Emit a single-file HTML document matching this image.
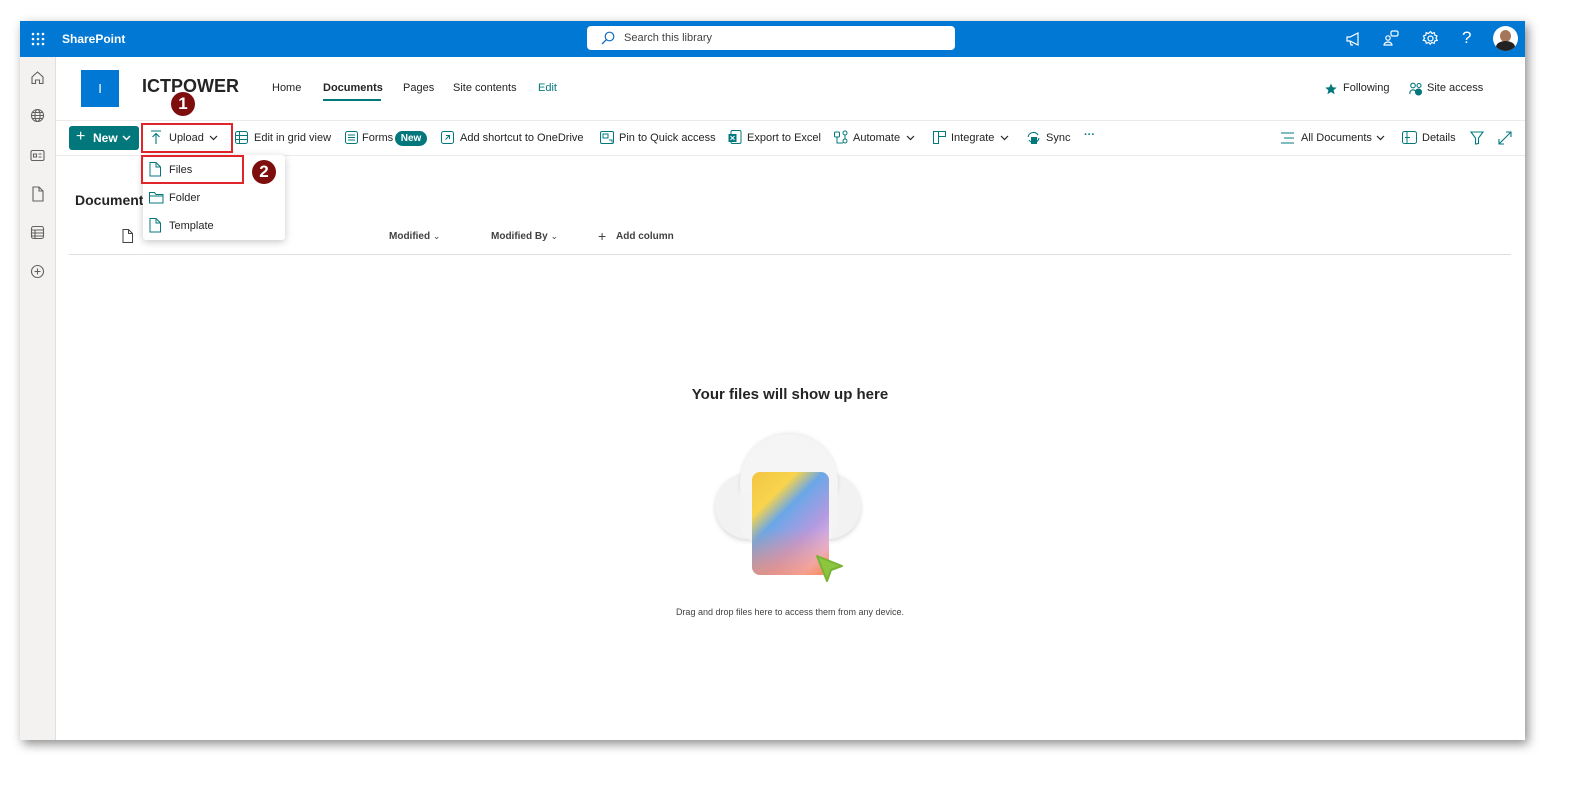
<!DOCTYPE html>
<html><head><meta charset="utf-8">
<style>
*{margin:0;padding:0;box-sizing:border-box}
body{width:1593px;height:793px;background:#fff;font-family:"Liberation Sans",sans-serif;position:relative;overflow:hidden;color:#242424}
.win{position:absolute;left:20px;top:21px;width:1505px;height:719px;background:#fff;box-shadow:3px 4px 10px rgba(0,0,0,.45)}
.hdr{position:absolute;left:0;top:0;width:1505px;height:36px;background:#0078d4;color:#fff}
.abs{position:absolute}
.rail{position:absolute;left:0;top:36px;width:36px;height:683px;background:#f3f2f1;border-right:1px solid #e1dfdd}
.t{position:absolute;font-size:11px;white-space:nowrap;color:#242424}
svg{display:block}
</style></head><body>
<div class="win">
 <div class="hdr">
  <svg class="abs" style="left:11px;top:11px" width="14" height="14"><g fill="#fff"><circle cx="2" cy="2" r="1.3"/><circle cx="7" cy="2" r="1.3"/><circle cx="12" cy="2" r="1.3"/><circle cx="2" cy="7" r="1.3"/><circle cx="7" cy="7" r="1.3"/><circle cx="12" cy="7" r="1.3"/><circle cx="2" cy="12" r="1.3"/><circle cx="7" cy="12" r="1.3"/><circle cx="12" cy="12" r="1.3"/></g></svg>
  <div class="abs" style="left:42px;top:11px;font-size:12px;font-weight:bold">SharePoint</div>
  <div class="abs" style="left:567px;top:5px;width:368px;height:24px;background:#fff;border-radius:4px">
   <svg class="abs" style="left:14px;top:5px" width="14" height="14"><circle cx="8.5" cy="5.5" r="4.3" fill="none" stroke="#0f6cbd" stroke-width="1.2"/><path d="M5.3 8.7L1 13" stroke="#0f6cbd" stroke-width="1.3"/></svg>
   <div class="abs" style="left:37px;top:6px;font-size:11px;color:#424242">Search this library</div>
  </div>
  <svg class="abs" style="left:1325px;top:10px" width="16" height="16" fill="none" stroke="#fff" stroke-width="1.2"><path d="M2 6h3l8-4v12l-8-4H2z M5 10l1 4h2"/></svg>
  <svg class="abs" style="left:1363px;top:9px" width="16" height="16" fill="none" stroke="#fff" stroke-width="1.2"><rect x="8" y="1" width="7" height="5" rx="1.5"/><circle cx="5" cy="8" r="2.2"/><path d="M1 15a4 3 0 0 1 8 0z"/></svg>
  <svg class="abs" style="left:1402px;top:9px" width="17" height="17" fill="none" stroke="#fff" stroke-width="1.2"><circle cx="8.5" cy="8.5" r="2.5"/><path d="M8.5 1.5l1.5 2 2.3-.8.4 2.4 2.3.9-1 2.2 1.2 2.1-2.4.6-.6 2.4-2.3-.9-1.7 1.8-1.6-1.8-2.3.9-.6-2.4-2.4-.6 1.2-2.1-1-2.2 2.3-.9.4-2.4 2.3.8z"/></svg>
  <div class="abs" style="left:1442px;top:7px;font-size:17px;color:#fff">?</div>
  <div class="abs" style="left:1473px;top:5px;width:25px;height:25px;border-radius:50%;background:#fff;overflow:hidden">
   <div class="abs" style="left:7px;top:4px;width:11px;height:12px;border-radius:50%;background:#a5775a"></div>
   <div class="abs" style="left:3px;top:15px;width:19px;height:12px;border-radius:50% 50% 0 0;background:#222"></div>
  </div>
 </div>
 <div class="rail">
  <svg class="abs" style="left:10px;top:13px" width="15" height="15" fill="none" stroke="#616161" stroke-width="1.1"><path d="M2 7l5.5-5 5.5 5v6.5H9.5V10h-4v3.5H2z"/></svg>
  <svg class="abs" style="left:10px;top:51px" width="15" height="15" fill="none" stroke="#616161" stroke-width="1.1"><circle cx="7.5" cy="7.5" r="6"/><ellipse cx="7.5" cy="7.5" rx="2.6" ry="6"/><path d="M1.5 7.5h12M2.5 4.5h10M2.5 10.5h10"/></svg>
  <svg class="abs" style="left:10px;top:91px" width="15" height="15" fill="none" stroke="#616161" stroke-width="1.1"><rect x="1" y="2.5" width="13" height="10" rx="1.5"/><path d="M3.5 6h3v3h-3zM8.5 6h3M8.5 9h3"/></svg>
  <svg class="abs" style="left:11px;top:129px" width="13" height="16" fill="none" stroke="#616161" stroke-width="1.1"><path d="M2 1h6l4 4v10H2z M8 1v4h4"/></svg>
  <svg class="abs" style="left:10px;top:168px" width="15" height="15" fill="none" stroke="#616161" stroke-width="1.1"><rect x="1.5" y="1.5" width="12" height="12" rx="2"/><path d="M1.5 5h12M1.5 8h12M1.5 11h12M5 5v8.5"/></svg>
  <svg class="abs" style="left:10px;top:207px" width="15" height="15" fill="none" stroke="#616161" stroke-width="1.1"><circle cx="7.5" cy="7.5" r="6"/><path d="M7.5 4.5v6M4.5 7.5h6"/></svg>
 </div>

 <div class="abs" style="left:61px;top:49px;width:38px;height:37px;background:#0078d4;color:#fff;font-size:13px;text-align:center;line-height:37px">I</div>
 <div class="abs" style="left:122px;top:55px;font-size:18px;font-weight:bold;color:#242424">ICTPOWER</div>
 <div class="t" style="left:252px;top:61px">Home</div>
 <div class="t" style="left:303px;top:61px;font-weight:bold">Documents</div>
 <div class="abs" style="left:303px;top:78px;width:58px;height:2px;background:#03787c"></div>
 <div class="t" style="left:383px;top:61px">Pages</div>
 <div class="t" style="left:433px;top:61px">Site contents</div>
 <div class="t" style="left:518px;top:61px;color:#03787c">Edit</div>
 <svg class="abs" style="left:1305px;top:62px" width="12" height="12"><path d="M6 .5l1.7 3.8 4 .3-3.1 2.6 1 4L6 9 2.4 11.2l1-4L.3 4.6l4-.3z" fill="#03787c"/></svg>
 <div class="t" style="left:1323px;top:61px">Following</div>
 <svg class="abs" style="left:1389px;top:61px" width="14" height="14" fill="none" stroke="#03787c" stroke-width="1.1"><circle cx="4" cy="3.5" r="2.3"/><circle cx="10" cy="3.5" r="2"/><path d="M1 12a3 3 0 0 1 6-2"/><circle cx="9.5" cy="10" r="3" fill="#03787c"/></svg>
 <div class="t" style="left:1407px;top:61px">Site access</div>

 <div class="abs" style="left:36px;top:99px;width:1469px;height:1px;background:#edebe9"></div>
 <div class="abs" style="left:36px;top:134px;width:1469px;height:1px;background:#edebe9"></div>
 <div class="abs" style="left:49px;top:105px;width:70px;height:24px;background:#03787c;border-radius:3px;color:#fff;font-size:12px;font-weight:bold">
  <span class="abs" style="left:7px;top:2px;font-size:16px;font-weight:normal">+</span><span class="abs" style="left:24px;top:5px">New</span>
  <svg class="abs" style="left:53px;top:9px" width="9" height="6"><path d="M1 1l3.5 3.5L8 1" stroke="#fff" stroke-width="1.5" fill="none"/></svg>
 </div>
 <svg class="abs" style="left:130px;top:109px" width="12" height="15" fill="none" stroke="#03787c" stroke-width="1.1"><path d="M1 1h10M6 3.5V14M2.5 7L6 3.5 9.5 7"/></svg>
 <div class="t" style="left:149px;top:111px">Upload</div>
 <svg class="abs" style="left:189px;top:114px" width="9" height="6"><path d="M1 1l3.5 3.5L8 1" stroke="#242424" stroke-width="1.2" fill="none"/></svg>
 <div class="abs" style="left:121px;top:102px;width:92px;height:30px;border:2px solid #e0262b"></div>
 <svg class="abs" style="left:215px;top:110px" width="13" height="13" fill="none" stroke="#03787c" stroke-width="1"><rect x=".5" y=".5" width="12" height="12" rx="2"/><path d="M.5 4.5h12M.5 8.5h12M4.5 .5v12"/></svg>
 <div class="t" style="left:234px;top:111px">Edit in grid view</div>
 <svg class="abs" style="left:325px;top:110px" width="13" height="13" fill="none" stroke="#03787c" stroke-width="1"><rect x=".5" y=".5" width="12" height="12" rx="2"/><path d="M3 4h7M3 6.5h7M3 9h7"/></svg>
 <div class="t" style="left:342px;top:111px">Forms</div>
 <div class="abs" style="left:375px;top:110px;width:32px;height:15px;border-radius:8px;background:#03787c;color:#fff;font-size:10px;font-weight:bold;text-align:center;line-height:15px">New</div>
 <svg class="abs" style="left:421px;top:110px" width="13" height="13" fill="none" stroke="#03787c" stroke-width="1"><rect x=".5" y=".5" width="12" height="12" rx="2"/><path d="M4.5 8.5l4-4M5 4.5h3.5V8"/></svg>
 <div class="t" style="left:440px;top:111px">Add shortcut to OneDrive</div>
 <svg class="abs" style="left:580px;top:110px" width="14" height="13" fill="none" stroke="#03787c" stroke-width="1"><rect x=".5" y=".5" width="13" height="12" rx="1.5"/><rect x="3" y="3" width="5" height="4"/><path d="M9 9h3v2.5"/></svg>
 <div class="t" style="left:599px;top:111px">Pin to Quick access</div>
 <svg class="abs" style="left:708px;top:109px" width="14" height="15"><rect x="3" y=".5" width="10" height="13" rx="1.5" fill="none" stroke="#03787c"/><rect x=".5" y="4" width="8" height="8" fill="#03787c"/><path d="M2.5 6l4 4M6.5 6l-4 4" stroke="#fff"/></svg>
 <div class="t" style="left:727px;top:111px">Export to Excel</div>
 <svg class="abs" style="left:814px;top:109px" width="14" height="15" fill="none" stroke="#03787c" stroke-width="1"><rect x=".5" y="2" width="5" height="5" rx="1"/><circle cx="11" cy="3" r="2"/><circle cx="11" cy="11" r="2"/><path d="M3 7v6h6M11 5v4"/></svg>
 <div class="t" style="left:833px;top:111px">Automate</div>
 <svg class="abs" style="left:886px;top:114px" width="9" height="6"><path d="M1 1l3.5 3.5L8 1" stroke="#242424" stroke-width="1.2" fill="none"/></svg>
 <svg class="abs" style="left:913px;top:110px" width="13" height="14" fill="none" stroke="#03787c" stroke-width="1"><rect x=".5" y=".5" width="5" height="12"/><rect x="5.5" y=".5" width="7" height="5"/></svg>
 <div class="t" style="left:931px;top:111px">Integrate</div>
 <svg class="abs" style="left:980px;top:114px" width="9" height="6"><path d="M1 1l3.5 3.5L8 1" stroke="#242424" stroke-width="1.2" fill="none"/></svg>
 <svg class="abs" style="left:1006px;top:109px" width="15" height="15"><path d="M2 7a5.5 5.5 0 0 1 10-2M13 8a5.5 5.5 0 0 1-10 2" fill="none" stroke="#03787c" stroke-width="1.1"/><rect x="5" y="7" width="6" height="7" fill="#03787c"/></svg>
 <div class="t" style="left:1026px;top:111px">Sync</div>
 <div class="t" style="left:1064px;top:108px;font-weight:bold;color:#03787c">···</div>
 <svg class="abs" style="left:1261px;top:111px" width="13" height="12" stroke="#03787c" stroke-width="1"><path d="M0 1h13M3 6h10M0 11h13"/></svg>
 <div class="t" style="left:1281px;top:111px">All Documents</div>
 <svg class="abs" style="left:1356px;top:114px" width="9" height="6"><path d="M1 1l3.5 3.5L8 1" stroke="#242424" stroke-width="1.2" fill="none"/></svg>
 <svg class="abs" style="left:1382px;top:110px" width="15" height="13" fill="none" stroke="#03787c" stroke-width="1"><rect x=".5" y=".5" width="14" height="12" rx="2"/><path d="M5 .5v12M3 6.5h5"/></svg>
 <div class="t" style="left:1402px;top:111px">Details</div>
 <svg class="abs" style="left:1450px;top:110px" width="14" height="14" fill="none" stroke="#03787c" stroke-width="1.1"><path d="M1 1h12L8.5 7v5.5L5.5 13V7z"/></svg>
 <svg class="abs" style="left:1478px;top:110px" width="14" height="14" fill="none" stroke="#03787c" stroke-width="1.1"><path d="M1 13L13 1M8 1h5v5M1 8v5h5"/></svg>

 <div class="abs" style="left:55px;top:171px;font-size:14px;font-weight:bold">Documents</div>
 <svg class="abs" style="left:102px;top:208px" width="11" height="14" fill="none" stroke="#424242" stroke-width="1"><path d="M1 .5h5.5l4 4v9H1z M6.5 .5v4h4"/></svg>
 <div class="t" style="left:369px;top:210px;font-size:10px;font-weight:bold;color:#424242">Modified <span style="font-weight:normal;font-size:9px">⌄</span></div>
 <div class="t" style="left:471px;top:210px;font-size:10px;font-weight:bold;color:#424242">Modified By <span style="font-weight:normal;font-size:9px">⌄</span></div>
 <div class="t" style="left:578px;top:207px;font-size:14px;color:#424242">+</div>
 <div class="t" style="left:596px;top:210px;font-size:10px;font-weight:bold;color:#424242">Add column</div>
 <div class="abs" style="left:49px;top:233px;width:1442px;height:1px;background:#e1dfdd"></div>

 <div class="abs" style="left:123px;top:134px;width:142px;height:85px;background:#fff;box-shadow:0 2px 8px rgba(0,0,0,.22);border-radius:3px"></div>
 <svg class="abs" style="left:129px;top:141px" width="13" height="15" fill="none" stroke="#03787c" stroke-width="1"><path d="M1 .5h6l4.5 4.5v9H1z M7 .5v4.5h4.5"/></svg>
 <div class="t" style="left:149px;top:143px">Files</div>
 <div class="abs" style="left:121px;top:134px;width:103px;height:29px;border:2px solid #e0262b"></div>
 <svg class="abs" style="left:129px;top:170px" width="15" height="13" fill="none" stroke="#03787c" stroke-width="1"><path d="M.5 1.5h5l1.5 2h7v8.5H.5z M.5 5h14"/></svg>
 <div class="t" style="left:149px;top:171px">Folder</div>
 <svg class="abs" style="left:129px;top:197px" width="13" height="15" fill="none" stroke="#03787c" stroke-width="1"><path d="M1 .5h6l4.5 4.5v9H1z M7 .5v4.5h4.5"/></svg>
 <div class="t" style="left:149px;top:199px">Template</div>

 <div class="abs" style="left:151px;top:71px;width:24px;height:24px;border-radius:50%;background:#7e0d0d;color:#fff;font-weight:bold;font-size:17px;text-align:center;line-height:24px">1</div>
 <div class="abs" style="left:232px;top:139px;width:24px;height:24px;border-radius:50%;background:#7e0d0d;color:#fff;font-weight:bold;font-size:17px;text-align:center;line-height:24px">2</div>

 <div class="abs" style="left:570px;top:365px;width:400px;text-align:center;font-size:15px;font-weight:bold;color:#242424">Your files will show up here</div>
 <div class="abs" style="left:695px;top:452px;width:66px;height:66px;border-radius:50%;background:#f2f2f2;box-shadow:0 2px 5px rgba(0,0,0,.15)"></div>
 <div class="abs" style="left:775px;top:452px;width:66px;height:66px;border-radius:50%;background:#f2f2f2;box-shadow:0 2px 5px rgba(0,0,0,.15)"></div>
 <div class="abs" style="left:720px;top:413px;width:98px;height:98px;border-radius:50%;background:#f5f5f5;box-shadow:0 -1px 4px rgba(0,0,0,.1)"></div>
 <div class="abs" style="left:720px;top:470px;width:98px;height:52px;background:#f4f4f4;border-radius:0 0 20px 20px"></div>
 <div class="abs" style="left:732px;top:451px;width:77px;height:103px;border-radius:8px;background:linear-gradient(135deg,#f4c542 0%,#f8d44c 25%,#6aa7e8 40%,#b49ae0 65%,#e6b9e5 85%,#f08a5d 100%)"></div>
 <div class="abs" style="left:732px;top:451px;width:77px;height:103px;border-radius:8px;background:linear-gradient(0deg,rgba(255,140,80,.6),rgba(255,255,255,0) 45%)"></div>
 <svg class="abs" style="left:795px;top:533px" width="30" height="30"><path d="M2 2l25 10-11 4-4 11z" fill="#8cc63f" stroke="#7ab334" stroke-linejoin="round" stroke-width="2"/></svg>
 <div class="abs" style="left:570px;top:586px;width:400px;text-align:center;font-size:9px;color:#424242">Drag and drop files here to access them from any device.</div>
</div>
</body></html>
